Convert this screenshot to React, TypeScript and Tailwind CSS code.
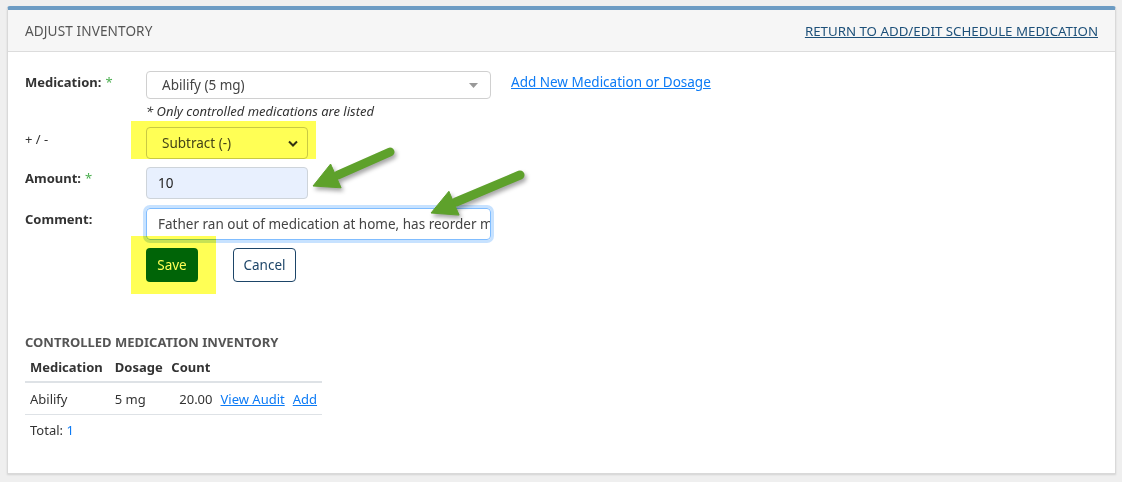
import React from "react";

const font = { fontFamily: '"Noto Sans", "Open Sans", Arial, sans-serif' };

function Star() {
  return <span className="text-[#4caf50] font-normal ml-1">*</span>;
}

export default function App() {
  return (
    <div
      className="relative w-[1122px] h-[482px] bg-[#efefef] pt-[6px] pl-[7px] pr-[6px] text-[#333]"
      style={font}
    >
      <div className="h-[468px] bg-white border border-[#d9d9d9] border-t-[4px] border-t-[#6b9bc3] rounded-t-[3px] shadow-[0_1px_2px_rgba(0,0,0,0.12)] flex flex-col">
        {/* header */}
        <div className="h-[42px] bg-[#f6f6f6] border-b border-[#dcdcdc] flex items-center justify-between pl-[17px] pr-[17px] pt-[2px]">
          <div className="text-[13.6px] text-[#555] tracking-[0.1px]">ADJUST INVENTORY</div>
          <a className="text-[13.3px] text-[#1d5079] underline">RETURN TO ADD/EDIT SCHEDULE MEDICATION</a>
        </div>

        {/* body */}
        <div className="pl-[17px] pt-[19px] flex flex-col">
          {/* medication row */}
          <div className="flex">
            <div className="w-[121px] pt-[1px] text-[13px] font-bold leading-[20px]">
              Medication:<Star />
            </div>
            <div className="flex flex-col">
              <div className="flex items-start">
                <div className="w-[345px] h-[28px] border border-[#d0d0d0] rounded-[4px] flex items-center justify-between pl-[15px] pr-[12px] text-[13.5px] text-[#444]">
                  <span>Abilify (5 mg)</span>
                  <svg width="9" height="5" viewBox="0 0 9 5">
                    <path d="M0 0 L9 0 L4.5 5 Z" fill="#999" />
                  </svg>
                </div>
                <a className="ml-[20px] mt-[1px] text-[13.5px] text-[#0d7bf5] underline leading-[20px]">
                  Add New Medication or Dosage
                </a>
              </div>
              <div className="text-[13px] italic leading-[18px] mt-[3px] text-[#333]">
                * Only controlled medications are listed
              </div>
            </div>
          </div>

          {/* +/- row */}
          <div className="flex mt-[7px]">
            <div className="w-[121px] pt-[2px] text-[13px] leading-[20px]">+ / -</div>
            <div className="w-[162px] h-[32px] border border-[#c9c9c9] rounded-[4px] flex items-center justify-between pl-[15px] pr-[9px] text-[13.5px] text-[#444]">
              <span>Subtract (-)</span>
              <svg width="10" height="7" viewBox="0 0 10 7">
                <path d="M1 1.5 L5 5.5 L9 1.5" stroke="#333" strokeWidth="2" fill="none" />
              </svg>
            </div>
          </div>

          {/* amount row */}
          <div className="flex mt-[8px]">
            <div className="w-[121px] pt-[1px] text-[13px] font-bold leading-[20px]">
              Amount:<Star />
            </div>
            <div className="w-[162px] h-[32px] border border-[#ced4da] bg-[#e8f0fe] rounded-[4px] flex items-center pl-[11px] text-[13.5px] text-[#222]">
              10
            </div>
          </div>

          {/* comment row */}
          <div className="flex mt-[9px]">
            <div className="w-[121px] pt-[1px] text-[13px] font-bold leading-[20px]">Comment:</div>
            <div className="w-[345px] h-[32px] border border-[#80bdff] rounded-[4px] shadow-[0_0_0_3px_rgba(0,123,255,0.22)] flex items-center pl-[11px] pr-[3px] text-[13.5px] text-[#444] overflow-hidden whitespace-nowrap">
              <span>Fathe</span>
              <span className="inline-block w-px h-[17px] bg-[#111]" />
              <span>r ran out of medication at home, has reorder m</span>
            </div>
          </div>

          {/* buttons */}
          <div className="flex mt-[8px] pl-[121px]">
            <button className="w-[52px] h-[34px] bg-[#006414] text-white rounded-[4px] text-[13.5px]" style={font}>
              Save
            </button>
            <button
              className="ml-[35px] w-[63px] h-[34px] bg-white text-[#1d4568] border border-[#1d4568] rounded-[4px] text-[13.5px]"
              style={font}
            >
              Cancel
            </button>
          </div>

          {/* inventory table */}
          <div className="mt-[51px] text-[13px] font-bold text-[#555] leading-[18px]">
            CONTROLLED MEDICATION INVENTORY
          </div>
          <table className="mt-[6px] w-[297px] text-[13px] border-collapse">
            <thead>
              <tr className="border-b-2 border-[#dee2e6]">
                <th className="text-left font-bold px-[5px] h-[25px] pb-[3px]">Medication</th>
                <th className="text-left font-bold px-[3px] pb-[3px]">Dosage</th>
                <th className="text-left font-bold px-[3px] pb-[3px]">Count</th>
                <th></th>
              </tr>
            </thead>
            <tbody>
              <tr className="border-b border-[#dee2e6] h-[32px]">
                <td className="px-[5px] pt-[2px]">Abilify</td>
                <td className="px-[3px] pt-[2px]">5 mg</td>
                <td className="px-[3px] pt-[2px] text-right">20.00</td>
                <td className="pl-[5px] pt-[2px] whitespace-nowrap">
                  <a className="text-[#0d7bf5] underline">View Audit</a>
                  <a className="ml-[8px] text-[#0d7bf5] underline">Add</a>
                </td>
              </tr>
              <tr className="h-[33px]">
                <td className="px-[5px]" colSpan={4}>
                  Total: <span className="text-[#0d7bf5]">1</span>
                </td>
              </tr>
            </tbody>
          </table>
        </div>
      </div>

      {/* yellow highlight annotations */}
      <div className="absolute left-[131px] top-[121px] w-[185px] h-[38px] bg-[#ffff55] mix-blend-multiply pointer-events-none" />
      <div className="absolute left-[131px] top-[236px] w-[85px] h-[58px] bg-[#ffff55] mix-blend-multiply pointer-events-none" />

      {/* green arrows */}
      <svg
        className="absolute left-0 top-0 pointer-events-none"
        width="1122"
        height="482"
        style={{ filter: "drop-shadow(2px 3px 2px rgba(0,0,0,0.35))" }}
      >
        <g fill="#5ea12b" stroke="#5ea12b">
          <line x1="390" y1="152" x2="338" y2="175" strokeWidth="9" strokeLinecap="round" />
          <polygon points="313,186 330.6,164 341.1,187.8" strokeWidth="1" strokeLinejoin="round" />
          <line x1="520" y1="175" x2="456" y2="202" strokeWidth="9" strokeLinecap="round" />
          <polygon points="431,213 448.9,191.3 459.1,215.1" strokeWidth="1" strokeLinejoin="round" />
        </g>
      </svg>
    </div>
  );
}
